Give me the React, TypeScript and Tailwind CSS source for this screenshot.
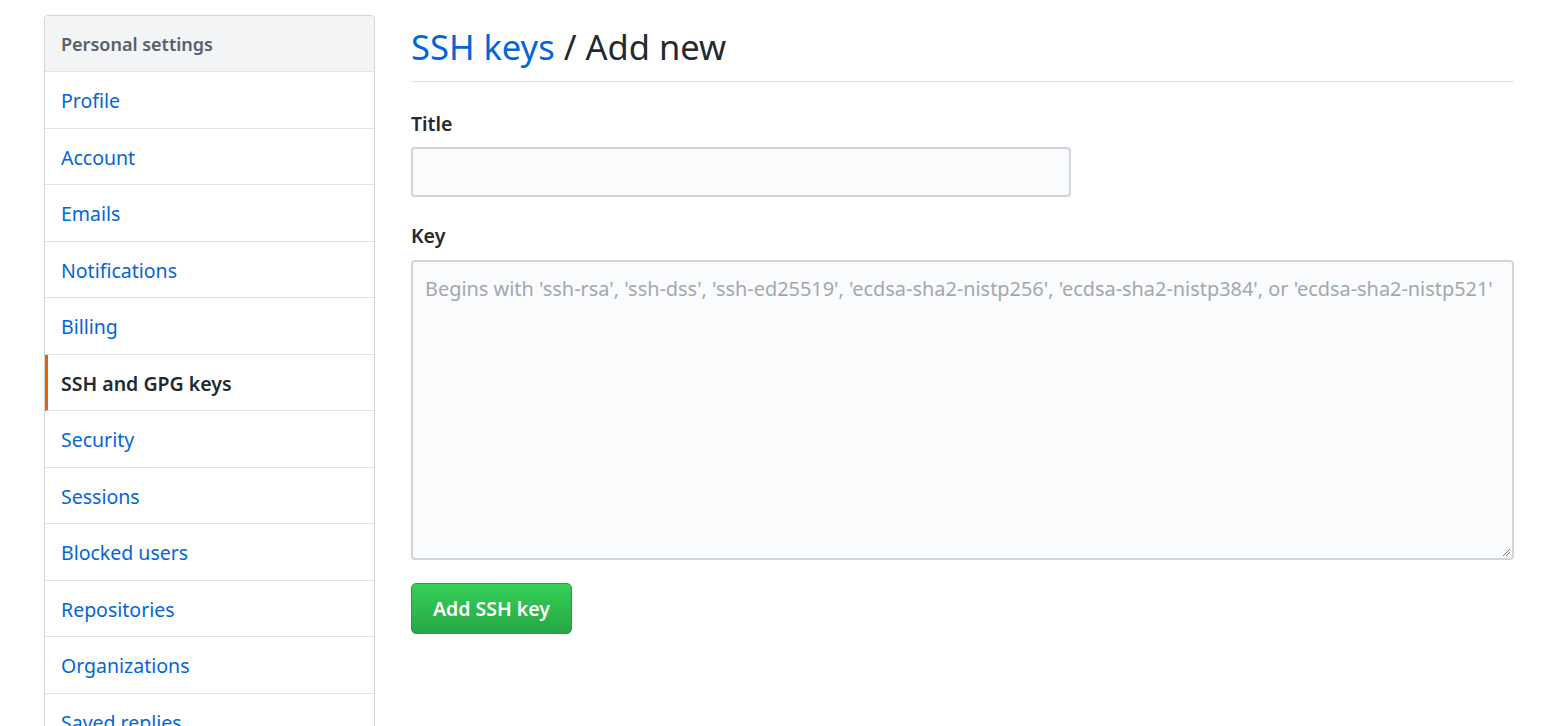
import React from "react";

const items = [
  "Profile",
  "Account",
  "Emails",
  "Notifications",
  "Billing",
  "SSH and GPG keys",
  "Security",
  "Sessions",
  "Blocked users",
  "Repositories",
  "Organizations",
  "Saved replies",
];

export default function App() {
  return (
    <div
      className="w-[1568px] h-[726px] overflow-hidden bg-white"
      style={{ fontFamily: '"Noto Sans", "Open Sans", sans-serif' }}
    >
      <div className="flex pl-[44px] pt-[15px] gap-[36px]">
        <nav className="w-[331px] shrink-0 border border-[#d1d5da] rounded-t-[4px] overflow-hidden">
          <div className="h-[56px] flex items-center px-[16px] pt-[2px] bg-[#f3f4f6] text-[#586069] text-[18px] font-semibold border-b border-[#e1e4e8]">
            Personal settings
          </div>
          {items.map((it) => {
            const active = it === "SSH and GPG keys";
            return (
              <div
                key={it}
                className={
                  active
                    ? "h-[56.5px] flex items-center pt-[2px] pl-[13px] pr-[16px] border-l-[3px] border-l-[#e36209] border-b border-b-[#e1e4e8] text-[#24292e] text-[19.5px] font-semibold"
                    : "h-[56.5px] flex items-center pt-[2px] px-[16px] border-b border-[#e1e4e8] text-[#0366d6] text-[19.5px]"
                }
              >
                {it}
              </div>
            );
          })}
        </nav>
        <main className="w-[1103px] shrink-0">
          <div className="border-b border-[#e1e4e8] pt-[7px] pb-[9px]">
            <h1 className="text-[34.5px] leading-[50px] text-[#24292e]">
              <span className="text-[#0366d6]">SSH keys</span> / Add new
            </h1>
          </div>
          <div className="mt-[27px] text-[19.5px] font-semibold text-[#24292e] leading-[30px]">
            Title
          </div>
          <div className="mt-[8px] w-[660px] h-[50px] rounded-[4px] border-2 border-[#d1d5da] bg-[#fafbfc]" />
          <div className="mt-[24px] text-[19.5px] font-semibold text-[#24292e] leading-[30px]">
            Key
          </div>
          <div className="mt-[9px] relative w-[1103px] h-[300px] rounded-[4px] border-2 border-[#d1d5da] bg-[#fafbfc] px-[12px] pt-[12px]">
            <div className="text-[19.9px] text-[#a3a8ae] leading-[30px] whitespace-nowrap">
              Begins with 'ssh-rsa', 'ssh-dss', 'ssh-ed25519', 'ecdsa-sha2-nistp256', 'ecdsa-sha2-nistp384', or 'ecdsa-sha2-nistp521'
            </div>
            <svg className="absolute right-[1px] bottom-[1px]" width="9" height="9" viewBox="0 0 9 9">
              <line x1="8" y1="1" x2="1" y2="8" stroke="#777" strokeWidth="1" />
              <line x1="8" y1="4" x2="4" y2="8" stroke="#777" strokeWidth="1" />
            </svg>
          </div>
          <button className="mt-[23px] w-[161px] h-[51px] rounded-[5px] border border-[#279f43] bg-gradient-to-b from-[#34d058] to-[#28a745] text-white text-[19.5px] font-semibold">
            Add SSH key
          </button>
        </main>
      </div>
    </div>
  );
}
